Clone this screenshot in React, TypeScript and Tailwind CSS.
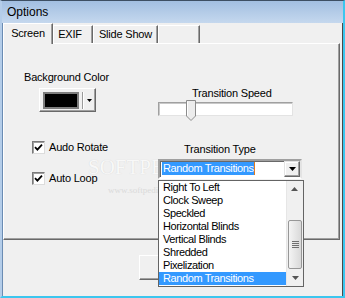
const items = [
  "Right To Left",
  "Clock Sweep",
  "Speckled",
  "Horizontal Blinds",
  "Vertical Blinds",
  "Shredded",
  "Pixelization",
  "Random Transitions",
]

function CheckBox({ label }: { label: string }) {
  return (
    <div className="flex items-center gap-[4px] ml-[28px]">
      <span className="w-[13px] h-[13px] flex items-center justify-center bg-white border border-t-[#7a7a7a] border-l-[#7a7a7a] border-b-[#dcdcdc] border-r-[#dcdcdc] shadow-[inset_1px_1px_0_#a0a0a0]">
        <svg width="9" height="9" viewBox="0 0 9 9">
          <path d="M1 4.2 L3.4 6.6 L8 1.6" fill="none" stroke="#000" strokeWidth="1.8" />
        </svg>
      </span>
      <span>{label}</span>
    </div>
  )
}

function Arrow({ color = "#000" }: { color?: string }) {
  return (
    <svg width="7" height="4" viewBox="0 0 7 4">
      <path d="M0 0 H7 L3.5 4 Z" fill={color} />
    </svg>
  )
}

export default function App() {
  return (
    <div className="relative w-[345px] h-[298px] overflow-hidden flex flex-col bg-[#f0f0f0] text-black text-[11px] leading-[13px] tracking-[-0.2px] font-['Liberation_Sans',Arial,sans-serif] border-t border-t-[#3d4f63] border-l-2 border-l-[#b4cde9] border-r-2 border-r-[#3cc6ee] border-b-2 border-b-[#3cc6ee]">
      {/* title bar */}
      <div className="h-[22px] shrink-0 flex items-center pl-[5px] pt-[1px] bg-linear-to-b from-[#a2bfe1] to-[#c5d8ee] text-[12px] tracking-normal">
        Options
      </div>

      <div className="flex-1 flex flex-col border-l border-l-[#6b8cb3] border-r border-r-[#4a4a4a]">
        {/* tabs */}
        <div className="h-[20px] shrink-0 flex items-end relative z-10">
          <div className="w-[50px] h-[21px] -mb-px flex justify-center pt-[3px] bg-[#f0f0f0] border-t border-l border-r border-t-white border-l-white border-r-[#696969] shadow-[inset_-1px_0_0_#a0a0a0]">
            Screen
          </div>
          <div className="w-[40px] h-[18px] flex justify-center pt-[2px] pr-[6px] border-t border-l border-r border-t-white border-l-white border-r-[#696969] shadow-[inset_-1px_0_0_#a0a0a0]">
            EXIF
          </div>
          <div className="w-[65px] h-[18px] flex justify-center pt-[2px] border-t border-l border-r border-t-white border-l-white border-r-[#696969] shadow-[inset_-1px_0_0_#a0a0a0]">
            Slide Show
          </div>
          <div className="w-[42px] h-[18px] border-t border-l border-r border-t-white border-l-white border-r-[#696969] shadow-[inset_-1px_0_0_#a0a0a0]" />
        </div>

        {/* tab panel */}
        <div className="relative h-[197px] mr-[2px] flex border border-t-white border-l-white border-r-[#696969] border-b-[#696969] shadow-[inset_-1px_-1px_0_#a0a0a0]">
          {/* watermark */}
          <div className="pointer-events-none absolute left-[84px] top-[113px] text-[21px] leading-[21px] tracking-normal font-['Liberation_Serif',serif] text-[#f8f8f8] [text-shadow:0_0_1px_#d0d0d0]">
            SOFTPEDIA
          </div>
          <div className="pointer-events-none absolute left-[104px] top-[142px] text-[9px] leading-[9px] tracking-normal font-['Liberation_Serif',serif] text-[#dadada]">
            www.softpedia.com
          </div>

          <div className="relative w-[154px] flex flex-col">
            <div className="mt-[27px] pl-[20px]">Background Color</div>
            <div className="mt-[4px] ml-[35px] w-[57px] h-[24px] flex items-center border border-t-white border-l-white border-r-[#696969] border-b-[#696969] shadow-[inset_-1px_-1px_0_#a0a0a0]">
              <span className="ml-[3px] w-[36px] h-[17px] bg-black border-2 border-[#7d7d7d]" />
              <span className="ml-[3px] w-px h-[17px] bg-[#9a9a9a] shadow-[1px_0_0_#fff]" />
              <span className="ml-[4px] flex">
                <svg width="5" height="3" viewBox="0 0 5 3">
                  <path d="M0 0 H5 L2.5 3 Z" fill="#000" />
                </svg>
              </span>
            </div>
            <div className="mt-[29px]">
              <CheckBox label="Audo Rotate" />
            </div>
            <div className="mt-[18px]">
              <CheckBox label="Auto Loop" />
            </div>
          </div>

          <div className="relative z-10 flex-1 flex flex-col">
            <div className="mt-[43px] pl-[34px]">Transition Speed</div>
            <div className="relative mt-[2px] w-[135px] h-[14px] bg-white border border-t-[#a0a0a0] border-l-[#a0a0a0] border-b-[#e3e3e3] border-r-[#e3e3e3] shadow-[inset_1px_1px_0_#c8c8c8]">
              <svg className="absolute left-[27px] top-[-3px]" width="10" height="21" viewBox="0 0 10 21">
                <path d="M0.5 0.5 H9.5 V16 L5 20.5 L0.5 16 Z" fill="#ececec" stroke="#8c8c8c" />
                <path d="M1.5 1.5 V15.5" stroke="#fff" />
              </svg>
            </div>
            <div className="mt-[27px] pl-[26px]">Transition Type</div>
            <div className="relative mt-[3px] w-[144px] h-[20px] flex bg-white border-2 border-t-[#a0a0a0] border-l-[#a0a0a0] border-b-white border-r-[#e3e3e3] shadow-[inset_1px_1px_0_#696969]">
              <div className="flex-1 pl-[2px] pt-px">
                <span className="inline-block h-[13px] pl-px bg-[#3399ff] text-white tracking-[-0.4px] border-r border-r-[#e07b1f]">
                  Random Transitions
                </span>
              </div>
              <div className="w-[16px] h-[16px] flex items-center justify-center bg-[#f0f0f0] border border-t-[#e3e3e3] border-l-[#e3e3e3] border-r-[#696969] border-b-[#696969] shadow-[inset_-1px_-1px_0_#a0a0a0,inset_1px_1px_0_#fff]">
                <Arrow />
              </div>

              {/* open drop-down list */}
              <div className="absolute z-20 left-[-2px] top-[19px] w-[146px] h-[107px] flex bg-white border border-[#646464]">
                <div className="flex-1 flex flex-col tracking-[-0.4px]">
                  {items.map((item) => (
                    <div
                      key={item}
                      className={
                        item === "Random Transitions"
                          ? "h-[13px] pl-[4px] bg-[#3399ff] text-white"
                          : "h-[13px] pl-[4px]"
                      }
                    >
                      {item}
                    </div>
                  ))}
                </div>
                <div className="w-[17px] flex flex-col bg-[#f0f0f0] border-l border-l-[#e6e6e6]">
                  <div className="h-[17px] flex items-center justify-center rotate-180">
                    <Arrow color="#555" />
                  </div>
                  <div className="flex-1" />
                  <div className="h-[49px] mx-px flex flex-col items-center justify-center gap-[1px] rounded-[2px] border border-[#979797] bg-linear-to-r from-[#f4f4f4] to-[#d9d9d9]">
                    <span className="w-[7px] h-px bg-[#707070]" />
                    <span className="w-[7px] h-px bg-[#707070]" />
                    <span className="w-[7px] h-px bg-[#707070]" />
                    <span className="w-[7px] h-px bg-[#707070]" />
                  </div>
                  <div className="h-[17px] flex items-center justify-center">
                    <Arrow color="#555" />
                  </div>
                </div>
              </div>
            </div>
          </div>
        </div>

        <div className="ml-[136px] mt-[15px] w-[75px] h-[25px] border border-t-white border-l-white border-r-[#696969] border-b-[#696969] shadow-[inset_-1px_-1px_0_#a0a0a0]" />
      </div>
    </div>
  )
}
